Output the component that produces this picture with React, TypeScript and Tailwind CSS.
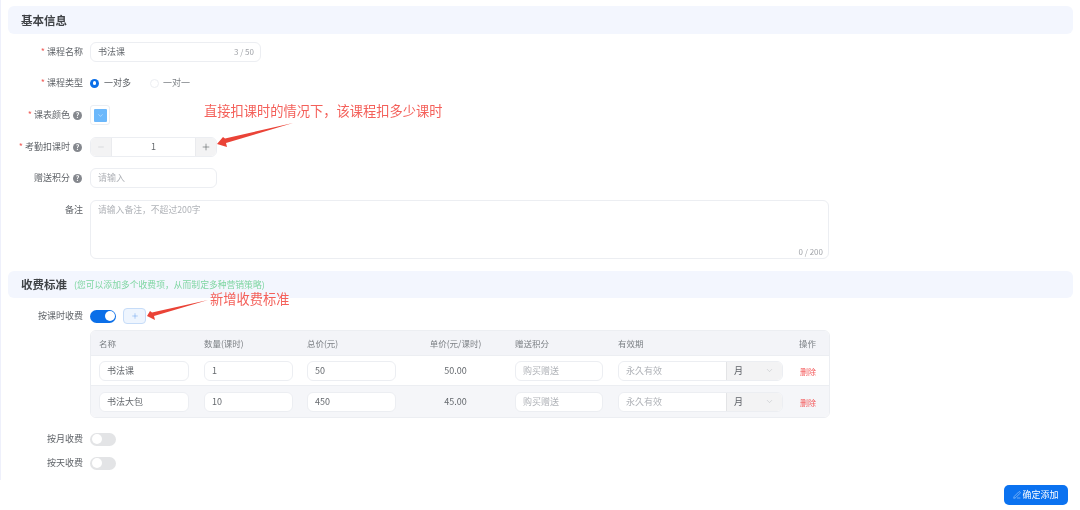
import { ChevronDown, Minus, Plus, PenLine } from "lucide-react";

const font = { fontFamily: '"Noto Sans CJK SC", "Noto Sans", sans-serif' };

function Help() {
  return (
    <span className="ml-[3px] mr-[1px] flex h-[9px] w-[9px] shrink-0 items-center justify-center rounded-full bg-[#85888e] text-[7px] font-bold leading-none text-white">
      ?
    </span>
  );
}

function Row({
  label,
  required,
  help,
  top,
  className,
  children,
}: {
  label: string;
  required?: boolean;
  help?: boolean;
  top?: boolean;
  className: string;
  children: React.ReactNode;
}) {
  return (
    <div className={`flex ${top ? "items-start" : "items-center"} ${className}`}>
      <div className={`flex w-[75px] shrink-0 items-center justify-end text-[9px] text-[#5f6368] ${top ? "mt-[3px]" : ""}`}>
        {required && <span className="mr-[2px] text-[#f0605c]">*</span>}
        <span>{label}</span>
        {help && <Help />}
      </div>
      <div className="ml-[7px] flex min-w-0 flex-1 items-center">{children}</div>
    </div>
  );
}

function Field({ value, placeholder, className = "" }: { value?: string; placeholder?: string; className?: string }) {
  return (
    <div
      className={`flex h-[20px] items-center rounded-[6px] border border-[#eceef2] bg-white px-[7px] text-[9px] ${
        value ? "text-[#65696e]" : "text-[#b0b3b8]"
      } ${className}`}
    >
      {value ?? placeholder}
    </div>
  );
}

function Toggle({ on }: { on?: boolean }) {
  return (
    <span
      className={`flex h-[13px] w-[26px] items-center rounded-full px-[1.5px] ${
        on ? "justify-end bg-[#0b6fe8]" : "justify-start bg-[#e3e4e6]"
      }`}
    >
      <span className="h-[10px] w-[10px] rounded-full bg-white" />
    </span>
  );
}

function SectionHeader({ title, note, className }: { title: string; note?: string; className: string }) {
  return (
    <div className={`flex items-center rounded-[6px] bg-[#f3f6fe] pl-[13px] ${className}`}>
      <span className="text-[11.5px] font-bold text-[#404347]">{title}</span>
      {note && <span className="ml-[7px] text-[8.8px] text-[#7fd6a2]">{note}</span>}
    </div>
  );
}

const gridCols = "grid grid-cols-[105px_103px_98px_101px_112px_181px_30px] items-center pl-[8px]";

function PriceRow({ name, qty, total, unit, alt, className }: { name: string; qty: string; total: string; unit: string; alt?: boolean; className: string }) {
  return (
    <div className={`${gridCols} ${alt ? "bg-[#f5f6f9]" : "bg-white"} ${className}`}>
      <Field value={name} className="w-[90px]" />
      <Field value={qty} className="w-[89px]" />
      <Field value={total} className="w-[89px]" />
      <div className="text-center text-[9px] text-[#65696e]">{unit}</div>
      <div className="pl-[9px]">
        <Field placeholder="购买赠送" className="w-[88px]" />
      </div>
      <div className="flex h-[20px] w-[165px] overflow-hidden rounded-[6px] border border-[#eceef2] bg-white text-[9px]">
        <div className="flex w-[107px] items-center px-[7px] text-[#b0b3b8]">永久有效</div>
        <div className="flex flex-1 items-center justify-between border-l border-[#e3e4e6] bg-[#f3f3f4] pl-[7px] pr-[8px] text-[#5f6368]">
          <span>月</span>
          <ChevronDown size={9} strokeWidth={1.2} className="text-[#b4b7bb]" />
        </div>
      </div>
      <div className="mt-[2px] pl-[1px] text-[8px] text-[#f4595a]">删除</div>
    </div>
  );
}

export default function App() {
  return (
    <div className="relative h-[510px] w-[1080px] overflow-hidden bg-white blur-[0.45px]" style={font}>
      <div className="h-[480px] border-l border-[#eef0fb] pl-[7px] pr-[7px] pt-[6px]">
        <SectionHeader title="基本信息" className="h-[28px] pt-[1px]" />

        <Row label="课程名称" required className="mt-[8px] h-[20px]">
          <div className="flex h-[20px] w-[171px] items-center justify-between rounded-[6px] border border-[#eceef2] bg-white pl-[7px] pr-[6px] text-[9px] text-[#65696e]">
            <span>书法课</span>
            <span className="text-[8px] text-[#a0a3a8]">3 / 50</span>
          </div>
        </Row>

        <Row label="课程类型" required className="mt-[11px] h-[20px]">
          <span className="flex h-[9px] w-[9px] items-center justify-center rounded-full bg-[#0b6fe8]">
            <span className="h-[3.5px] w-[3.5px] rounded-full bg-white" />
          </span>
          <span className="ml-[5px] text-[9px] text-[#5f6368]">一对多</span>
          <span className="ml-[19px] h-[9px] w-[9px] rounded-full border border-[#eceef2]" />
          <span className="ml-[4px] text-[9px] text-[#7d8186]">一对一</span>
        </Row>

        <Row label="课表颜色" required help className="mt-[12px] h-[20px]">
          <div className="flex h-[20px] w-[20px] items-center justify-center rounded-[3px] border border-[#eceef2] bg-white">
            <div className="flex h-[13px] w-[13px] items-center justify-center rounded-[1px] bg-[#6cb8fb]">
              <ChevronDown size={7} strokeWidth={1.5} className="text-white" />
            </div>
          </div>
        </Row>

        <Row label="考勤扣课时" required help className="mt-[12px] h-[20px]">
          <div className="flex h-[20px] w-[127px] overflow-hidden rounded-[6px] border border-[#eceef2] bg-white text-[9px] text-[#65696e]">
            <div className="flex w-[21px] items-center justify-center border-r border-[#eaebee] bg-[#f3f3f4]">
              <Minus size={8} strokeWidth={1.2} className="text-[#b4b7bb]" />
            </div>
            <div className="flex flex-1 items-center justify-center">1</div>
            <div className="flex w-[21px] items-center justify-center border-l border-[#eaebee] bg-[#f3f3f4]">
              <Plus size={10} strokeWidth={1.5} className="text-[#5f6368]" />
            </div>
          </div>
        </Row>

        <Row label="赠送积分" help className="mt-[11px] h-[20px]">
          <Field placeholder="请输入" className="w-[127px]" />
        </Row>

        <Row label="备注" top className="mt-[12px] h-[59px]">
          <div className="relative h-[59px] w-[739px] rounded-[6px] border border-[#eceef2] bg-white px-[7px] py-[2px] text-[8.8px] text-[#b0b3b8]">
            请输入备注，不超过200字
            <span className="absolute bottom-0 right-[5px] text-[8px] text-[#a0a3a8]">0 / 200</span>
          </div>
        </Row>

        <SectionHeader title="收费标准" note="(您可以添加多个收费项，从而制定多种营销策略)" className="mt-[12px] h-[27px]" />

        <Row label="按课时收费" className="mt-[8px] h-[20px]">
          <Toggle on />
          <div className="ml-[7px] flex h-[16px] w-[23px] items-center justify-center rounded-[4px] border border-[#c6dcf8] bg-[#eef5fe]">
            <Plus size={8} strokeWidth={1.3} className="text-[#4f93ea]" />
          </div>
        </Row>

        <div className="ml-[82px] mt-[4px] w-[740px] overflow-hidden rounded-[6px] border border-[#eceef2]">
          <div className={`${gridCols} h-[24px] bg-[#f3f4f8] text-[8.5px] text-[#7d8186]`}>
            <div>名称</div>
            <div>数量(课时)</div>
            <div>总价(元)</div>
            <div className="text-center">单价(元/课时)</div>
            <div className="pl-[9px]">赠送积分</div>
            <div>有效期</div>
            <div>操作</div>
          </div>
          <PriceRow name="书法课" qty="1" total="50" unit="50.00" className="h-[30px] border-t border-[#eceef2]" />
          <PriceRow name="书法大包" qty="10" total="450" unit="45.00" alt className="h-[32px] border-t border-[#eceef2]" />
        </div>

        <Row label="按月收费" className="mt-[11px] h-[20px]">
          <Toggle />
        </Row>
        <Row label="按天收费" className="mt-[4px] h-[20px]">
          <Toggle />
        </Row>
      </div>

      <div className="flex justify-end pr-[12px] pt-[5px]">
        <button className="flex h-[20px] w-[64px] items-center justify-center rounded-[5px] bg-[#0b72f0] text-[9px] text-white">
          <PenLine size={8} strokeWidth={1.3} className="mr-[1px]" />
          确定添加
        </button>
      </div>

      {/* annotations */}
      <div className="absolute left-[204px] top-[102px] text-[13.25px] leading-[18px] text-[#f4605a]">直接扣课时的情况下，该课程扣多少课时</div>
      <div className="absolute left-[210px] top-[290px] text-[13.25px] leading-[18px] text-[#f4605a]">新增收费标准</div>
      <svg className="absolute left-0 top-0 pointer-events-none" width="1080" height="510" viewBox="0 0 1080 510">
        <polygon points="293,123 225,138.5 223,137 217,144 227,147 226,143" fill="#ea4337" />
        <polygon points="208,300 152,312.5 150,311 147,316 155,320 154,316" fill="#ea4337" />
      </svg>
    </div>
  );
}
